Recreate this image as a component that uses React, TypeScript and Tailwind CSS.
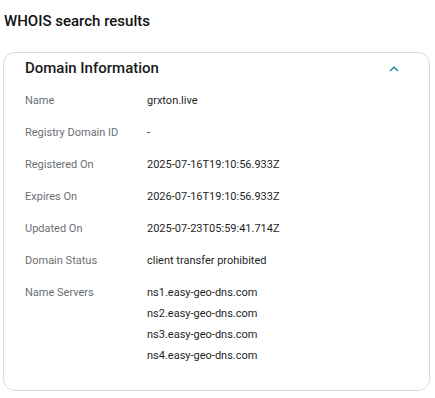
const rows: [string, string[]][] = [
  ["Name", ["grxton.live"]],
  ["Registry Domain ID", ["-"]],
  ["Registered On", ["2025-07-16T19:10:56.933Z"]],
  ["Expires On", ["2026-07-16T19:10:56.933Z"]],
  ["Updated On", ["2025-07-23T05:59:41.714Z"]],
  ["Domain Status", ["client transfer prohibited"]],
  [
    "Name Servers",
    ["ns1.easy-geo-dns.com", "ns2.easy-geo-dns.com", "ns3.easy-geo-dns.com", "ns4.easy-geo-dns.com"],
  ],
]

export default function App() {
  return (
    <div className="w-[435px] h-[398px] bg-white font-['Roboto',sans-serif] text-[#111]">
      <div className="pl-[4px] pt-[11px]">
        <h1 className="text-[15px] font-medium leading-5">WHOIS search results</h1>
      </div>
      <div className="mt-[21px] ml-[3px] w-[427px] h-[339px] border border-[#d6dbe0] rounded-[12px]">
        <div className="flex items-center justify-between pl-[21px] pr-[30px] pt-[4px] h-[26px]">
          <h2 className="text-[15px] font-medium leading-5 text-[#1a1a1a]">Domain Information</h2>
          <svg width="10" height="6" viewBox="0 0 10 6" fill="none" className="mt-[1px]">
            <path d="M1 5L5 1.2L9 5" stroke="#1b8c98" strokeWidth="1.4" />
          </svg>
        </div>
        <div className="pl-[21px] pt-[8px] text-[11px] leading-[14px]">
          {rows.map(([label, values]) => (
            <div key={label} className="flex min-h-[32px] items-start pt-[7px]">
              <div className="w-[122px] text-[11px] text-[#6b6f75]">{label}</div>
              <div className="flex flex-col gap-[7px] text-[#1f1f1f]">
                {values.map((v) => (
                  <div key={v}>{v}</div>
                ))}
              </div>
            </div>
          ))}
        </div>
      </div>
    </div>
  )
}
